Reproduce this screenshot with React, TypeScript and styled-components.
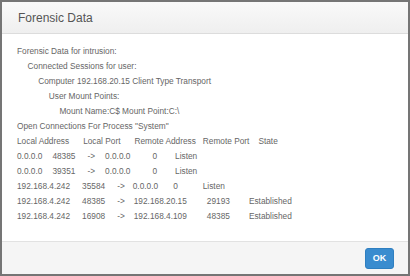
import React from 'react';
import styled, { createGlobalStyle } from 'styled-components';

const GlobalStyle = createGlobalStyle`
  html, body {
    margin: 0;
    padding: 0;
    background: #ffffff;
  }
  body {
    font-family: "Liberation Sans", Arial, Helvetica, sans-serif;
  }
`;

const Dialog = styled.div`
  box-sizing: border-box;
  width: 410px;
  height: 276px;
  border: 2px solid #757575;
  display: flex;
  flex-direction: column;
  background: #ffffff;
  overflow: hidden;
`;

const Header = styled.div`
  height: 31px;
  flex: none;
  display: flex;
  align-items: center;
  padding: 0 16px;
  background: linear-gradient(to bottom, #f9f9f9, #efefef);
  border-bottom: 1px solid #dcdcdc;
`;

const Title = styled.h4`
  margin: 0;
  font-size: 12px;
  font-weight: normal;
  color: #555555;
`;

const Body = styled.div`
  flex: 1;
  padding: 10px 15px 0;
  font-size: 8.3px;
  line-height: 15px;
  color: #666666;
`;

const Line = styled.div<{ $level?: number }>`
  padding-left: ${(p) => (p.$level || 0) * 10.6}px;
  white-space: nowrap;
`;

const Row = styled.div`
  display: flex;
  white-space: nowrap;
`;

const Cell = styled.span<{ $gap?: number }>`
  margin-left: ${(p) => p.$gap || 0}px;
`;

const Footer = styled.div`
  height: 32px;
  flex: none;
  display: flex;
  align-items: center;
  justify-content: flex-end;
  padding: 0 14px;
  background: #f5f5f5;
  border-top: 1px solid #e2e2e2;
`;

const OkButton = styled.button`
  width: 29px;
  height: 21px;
  padding: 0;
  border: 1px solid #2f7fc0;
  border-radius: 3px;
  background: #3a8ccf;
  color: #ffffff;
  font-family: inherit;
  font-size: 9px;
  font-weight: bold;
  cursor: pointer;
`;

type CellDef = [string, number];

const header: CellDef[] = [
  ['Local Address', 0],
  ['Local Port', 14],
  ['Remote Address', 14],
  ['Remote Port', 7],
  ['State', 9],
];

const connections: CellDef[][] = [
  [['0.0.0.0', 0], ['48385', 10], ['->', 12], ['0.0.0.0', 10], ['0', 22], ['Listen', 18]],
  [['0.0.0.0', 0], ['39351', 10], ['->', 12], ['0.0.0.0', 10], ['0', 22], ['Listen', 18]],
  [['192.168.4.242', 0], ['35584', 12], ['->', 12], ['0.0.0.0', 8], ['0', 15], ['Listen', 25]],
  [['192.168.4.242', 0], ['48385', 12], ['->', 12], ['192.168.20.15', 9], ['29193', 20], ['Established', 19]],
  [['192.168.4.242', 0], ['16908', 12], ['->', 12], ['192.168.4.109', 9], ['48385', 20], ['Established', 19]],
];

const renderRow = (cells: CellDef[], key: number | string) => (
  <Row key={key}>
    {cells.map(([text, gap], i) => (
      <Cell key={i} $gap={gap}>
        {text}
      </Cell>
    ))}
  </Row>
);

export default function App() {
  return (
    <>
      <GlobalStyle />
      <Dialog>
        <Header>
          <Title>Forensic Data</Title>
        </Header>
        <Body>
          <Line>Forensic Data for intrusion:</Line>
          <Line $level={1}>Connected Sessions for user:</Line>
          <Line $level={2}>Computer 192.168.20.15 Client Type Transport</Line>
          <Line $level={3}>User Mount Points:</Line>
          <Line $level={4}>Mount Name:C$ Mount Point:C:\</Line>
          <Line>Open Connections For Process "System"</Line>
          {renderRow(header, 'head')}
          {connections.map((row, i) => renderRow(row, i))}
        </Body>
        <Footer>
          <OkButton>OK</OkButton>
        </Footer>
      </Dialog>
    </>
  );
}
